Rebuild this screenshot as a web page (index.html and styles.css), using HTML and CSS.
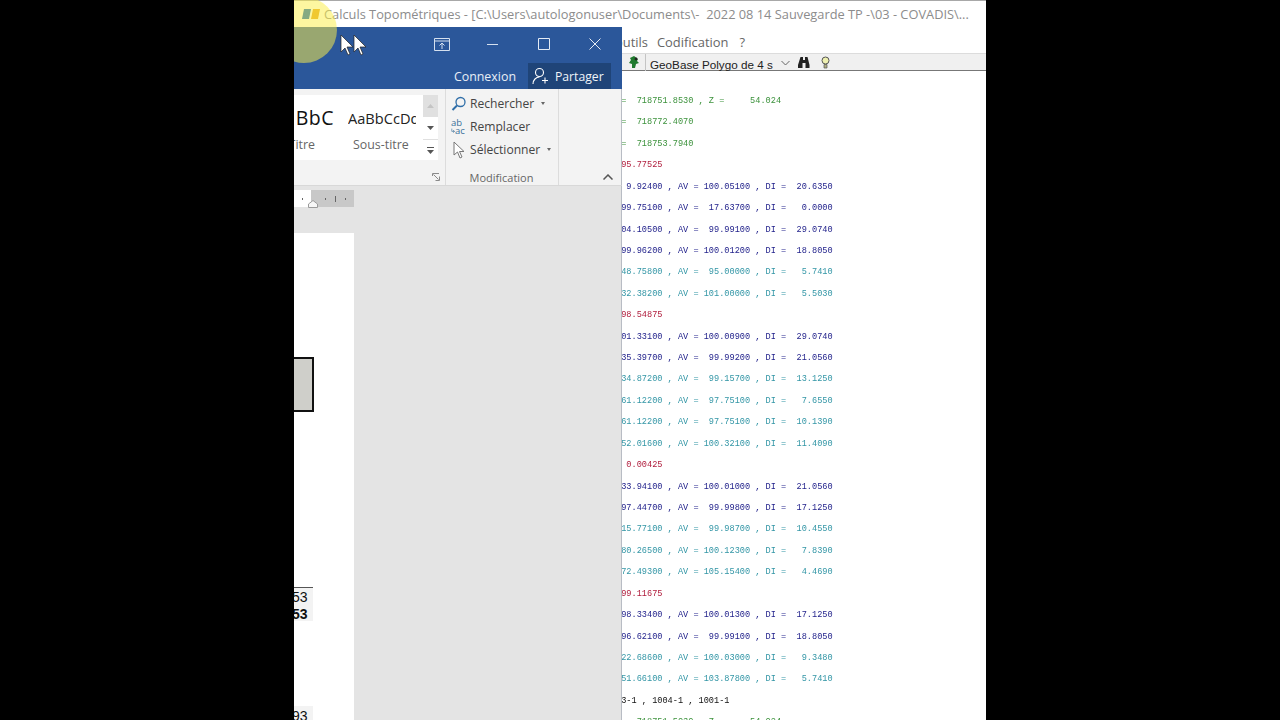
FILE: index.html
```html
<!DOCTYPE html>
<html lang="fr">
<head>
<meta charset="utf-8">
<title>Calculs Topométriques</title>
<link rel="stylesheet" href="styles.css">
</head>
<body>
<div class="screen">
  <div class="app">
    <div class="app-title">
      <svg class="app-logo" width="18" height="10" viewBox="0 0 18 10"><path d="M2 0h7L7 10H0z" fill="#005ebf"/><path d="M11 0h7l-2 10H9z" fill="#e49d15"/></svg>
      <span>Calculs Topométriques - [C:\Users\autologonuser\Documents\-  2022 08 14 Sauvegarde TP -\03 - COVADIS\...</span>
    </div>
    <div class="app-menu"><span>outils</span><span>Codification</span><span>?</span></div>
    <div class="app-tools">
      <svg class="tool-green" width="12" height="12" viewBox="0 0 12 12"><path d="M6 0l4 3-1 2 2 2-3 1-1 4H4V8L1 7l2-3-1-2z" fill="#1f7a2e"/><circle cx="8" cy="3" r="1.4" fill="#222"/></svg>
      <div class="combo"><span>GeoBase Polygo de 4 s</span><svg width="9" height="6" viewBox="0 0 9 6"><path d="M.5 1l4 4 4-4" fill="none" stroke="#666"/></svg></div>
      <svg class="tool-bino" width="12" height="11" viewBox="0 0 12 11"><path d="M2.5 0h2.5v3h2V0h2.500l2 8v3H7.500V6h-3v5H0V8z" fill="#222"/></svg>
      <svg class="tool-bulb" width="9" height="13" viewBox="0 0 9 13"><circle cx="4.500" cy="4.500" r="3.500" fill="#eef0b0" stroke="#555"/><path d="M3 8.500h3v3.500H3z" fill="#b0b080" stroke="#555" stroke-width=".7"/></svg>
    </div>
    <div class="listing">
      <div class="row green">=  718751.8530 , Z =     54.024</div>
      <div class="row green">=  718772.4070</div>
      <div class="row green">=  718753.7940</div>
      <div class="row red">95.77525</div>
      <div class="row navy"> 9.92400 , AV = 100.05100 , DI =  20.6350</div>
      <div class="row navy">99.75100 , AV =  17.63700 , DI =   0.0000</div>
      <div class="row navy">04.10500 , AV =  99.99100 , DI =  29.0740</div>
      <div class="row navy">99.96200 , AV = 100.01200 , DI =  18.8050</div>
      <div class="row teal">48.75800 , AV =  95.00000 , DI =   5.7410</div>
      <div class="row teal">32.38200 , AV = 101.00000 , DI =   5.5030</div>
      <div class="row red">98.54875</div>
      <div class="row navy">01.33100 , AV = 100.00900 , DI =  29.0740</div>
      <div class="row navy">35.39700 , AV =  99.99200 , DI =  21.0560</div>
      <div class="row teal">34.87200 , AV =  99.15700 , DI =  13.1250</div>
      <div class="row teal">61.12200 , AV =  97.75100 , DI =   7.6550</div>
      <div class="row teal">61.12200 , AV =  97.75100 , DI =  10.1390</div>
      <div class="row teal">52.01600 , AV = 100.32100 , DI =  11.4090</div>
      <div class="row red"> 0.00425</div>
      <div class="row navy">33.94100 , AV = 100.01000 , DI =  21.0560</div>
      <div class="row navy">97.44700 , AV =  99.99800 , DI =  17.1250</div>
      <div class="row teal">15.77100 , AV =  99.98700 , DI =  10.4550</div>
      <div class="row teal">80.26500 , AV = 100.12300 , DI =   7.8390</div>
      <div class="row teal">72.49300 , AV = 105.15400 , DI =   4.4690</div>
      <div class="row red">99.11675</div>
      <div class="row navy">98.33400 , AV = 100.01300 , DI =  17.1250</div>
      <div class="row navy">96.62100 , AV =  99.99100 , DI =  18.8050</div>
      <div class="row teal">22.68600 , AV = 100.03000 , DI =   9.3480</div>
      <div class="row teal">51.66100 , AV = 103.87800 , DI =   5.7410</div>
      <div class="row black">3-1 , 1004-1 , 1001-1</div>
      <div class="row green">=  718751.5030 , Z =     54.024</div>
    </div>
  </div>

  <div class="word">
    <div class="word-controls">
      <div class="ctl"><svg width="16" height="13" viewBox="0 0 16 13"><path d="M.5.500h15v12H.5zM.5 3h15M8 11V5M5.500 7.500L8 5l2.500 2.500" fill="none" stroke="#d5e0ef"/></svg></div>
      <div class="ctl"><svg width="11" height="1" viewBox="0 0 11 1"><path d="M0 .5h11" stroke="#d5e0ef"/></svg></div>
      <div class="ctl"><svg width="12" height="12" viewBox="0 0 12 12"><path d="M.5.500h11v11H.5z" fill="none" stroke="#e4ebf5"/></svg></div>
      <div class="ctl"><svg width="12" height="12" viewBox="0 0 12 12"><path d="M.5.500l11 11M11.500.500l-11 11" fill="none" stroke="#e4ebf5"/></svg></div>
    </div>
    <div class="word-account">
      <span class="connexion">Connexion</span>
      <div class="share">
        <svg width="18" height="18" viewBox="0 0 18 18"><circle cx="7.500" cy="5.500" r="4" fill="none" stroke="#fff" stroke-width="1.100"/><path d="M1 17c0-4 3-7 6.500-7M13 10.500v6M10 13.500h6" fill="none" stroke="#fff" stroke-width="1.100"/></svg>
        <span>Partager</span>
      </div>
    </div>
    <div class="ribbon">
      <div class="gallery">
        <div class="style-title"><span class="sample big">BbC</span><span class="style-name">Titre</span></div>
        <div class="style-sub"><span class="sample">AaBbCcDd</span><span class="style-name">Sous-titre</span></div>
      </div>
      <div class="gallery-scroll">
        <div class="gs gs-up"><svg width="7" height="4" viewBox="0 0 7 4"><path d="M0 4l3.500-4L7 4z" fill="#c4c4c4"/></svg></div>
        <div class="gs"><svg width="7" height="4" viewBox="0 0 7 4"><path d="M0 0l3.500 4L7 0z" fill="#555"/></svg></div>
        <div class="gs gs-more"><svg width="7" height="7" viewBox="0 0 7 7"><path d="M0 .5h7" stroke="#555"/><path d="M0 3l3.500 4L7 3z" fill="#555"/></svg></div>
      </div>
      <div class="launcher"><svg width="8" height="8" viewBox="0 0 8 8"><path d="M.5 3V.5H7M1.500 1.500l5 5M7.500 3.500v4h-4" fill="none" stroke="#8a8a8a"/></svg></div>
      <div class="edit-group">
        <div class="edit-items">
          <div class="edit-item"><svg width="16" height="16" viewBox="0 0 16 16"><circle cx="9.500" cy="6" r="4.500" fill="none" stroke="#2f6ea8" stroke-width="1.300"/><path d="M6 9.500L1.500 14" stroke="#2f6ea8" stroke-width="2"/></svg><span>Rechercher</span><i class="caret"></i></div>
          <div class="edit-item"><span class="abac"><b>ab</b><span class="abac-low"><svg width="4" height="6" viewBox="0 0 5 6"><path d="M1 0v3.500h3M2.500 2L4.500 3.500 2.500 5" fill="none" stroke="#3a6f9a" stroke-width=".8"/></svg><b>ac</b></span></span><span>Remplacer</span></div>
          <div class="edit-item"><svg width="16" height="18" viewBox="0 0 16 18"><path d="M3 1v13l3.500-3 2.500 6 2-1-2.500-5.500H13z" fill="#fff" stroke="#777"/></svg><span>Sélectionner</span><i class="caret"></i></div>
        </div>
        <div class="group-label">Modification</div>
      </div>
      <div class="ribbon-end"><svg width="10" height="6" viewBox="0 0 10 6"><path d="M.5 5.500L5 1l4.500 4.500" fill="none" stroke="#555" stroke-width="1.500"/></svg></div>
    </div>
    <div class="workspace">
      <div class="ruler">
        <div class="ruler-white"><i class="tick"></i></div>
        <svg class="indent" width="10" height="8" viewBox="0 0 10 8"><path d="M.5 7.500V4L5 .5 9.500 4v3.500z" fill="#f6f6f6" stroke="#9a9a9a"/></svg>
        <div class="ruler-grey"><i class="tick"></i><i class="tick tall"></i><i class="tick"></i></div>
      </div>
      <div class="page">
        <div class="shape"></div>
        <div class="cells">
          <div class="cell">53</div>
          <div class="cell bold">53</div>
        </div>
        <div class="cell last">93</div>
      </div>
    </div>
  </div>

  <div class="highlight"></div>
  <svg class="cursors" width="28" height="22" viewBox="0 0 28 22"><g fill="#fff" stroke="#222" stroke-width=".7"><path d="M1 1v17l4-4 3 7 2-1-3-7h6z"/><path d="M14 1v17l4-4 3 7 2-1-3-7h6z"/></g></svg>
</div>
</body>
</html>
```
FILE: styles.css
```css
* { box-sizing: border-box; }
html, body { margin: 0; height: 100%; background: #000; overflow: hidden; }
.screen { position: relative; width: 692px; height: 720px; margin-left: 294px; background: #fff; overflow: hidden; font-family: "Open Sans", "Noto Sans", sans-serif; }

.app { display: flex; flex-direction: column; height: 100%; }
.app-title { height: 27px; flex: none; display: flex; align-items: center; border-top: 1px solid #a8a8a8; padding-left: 8px; font-size: 12.82px; color: #8c8c8c; white-space: pre; }
.app-logo { margin-right: 4px; flex: none; }
.app-menu { height: 26px; flex: none; display: flex; gap: 11px; align-items: center; padding-left: 321px; padding-top: 4px; font-size: 12.9px; color: #666; }
.app-menu span:first-child { width: 31px; }
.app-tools { height: 18px; flex: none; display: flex; align-items: center; padding-left: 334px; background: #f0f0f0; border-top: 1px solid #dcdcdc; border-bottom: 1px solid #777; }
.tool-green { flex: none; }
.combo { width: 148px; height: 17px; margin-left: 5px; display: flex; align-items: center; justify-content: space-between; padding: 4px 3px 0 4px; overflow: hidden; font-family: "Liberation Sans", sans-serif; font-size: 11.7px; color: #222; border-left: 1px solid #c4c4c4; }
.combo svg { margin-top: -3px; }
.tool-bino { margin-left: 5px; flex: none; }
.tool-bulb { margin-left: 11px; flex: none; }

.listing { flex: 1; min-height: 0; padding: 20px 0 0 327.2px; font-family: "Liberation Mono", monospace; font-size: 8.6px; filter: blur(.25px); }
.row { height: 21.43px; line-height: 21.43px; white-space: pre; }
.green { color: #3c923c; }
.red { color: #b01c3c; }
.navy { color: #23238c; }
.teal { color: #3396a6; }
.black { color: #111; }

.word { position: absolute; left: 0; top: 27px; bottom: 0; width: 328px; display: flex; flex-direction: column; background: #e4e4e4; }
.word-controls { height: 36px; flex: none; display: flex; justify-content: flex-end; background: #2b579a; padding: 0 2px 2px 0; }
.ctl { width: 51px; display: flex; align-items: center; justify-content: center; }
.word-account { height: 26px; flex: none; display: flex; justify-content: flex-end; align-items: stretch; background: #2b579a; padding-right: 11px; }
.connexion { align-self: center; margin-right: 12px; font-size: 12.4px; color: #e8eef6; }
.share { width: 83px; display: flex; align-items: center; gap: 5px; padding-left: 4px; background: #1f4478; font-size: 12.2px; color: #f0f4f9; }

.ribbon { height: 97px; flex: none; display: flex; background: #f3f3f3; border-bottom: 1px solid #d8d8d8; border-right: 1px solid #b8bcc4; }
.gallery { width: 129px; height: 65px; margin-top: 6px; flex: none; display: flex; background: #fff; overflow: hidden; }
.style-title { width: 54px; flex: none; display: flex; flex-direction: column; align-items: flex-end; padding-right: 33px; }
.style-sub { flex: none; width: 68px; display: flex; flex-direction: column; overflow: hidden; white-space: nowrap; }
.sample { height: 38px; line-height: 46px; font-size: 14.6px; color: #222; }
.sample.big { font-size: 19.5px; color: #111; margin-right: -19px; letter-spacing: .5px; }
.style-name { margin-top: 3px; font-size: 12.4px; color: #666; }
.style-sub .style-name { margin-left: 5px; }
.gallery-scroll { width: 15px; height: 65px; margin-top: 6px; flex: none; display: flex; flex-direction: column; background: #fff; }
.gs { height: 22px; display: flex; align-items: center; justify-content: center; }
.gs-more { height: 21px; border-top: 1px solid #e0e0e0; }
.gs-up { background: #e0e0e0; }
.launcher { width: 8px; flex: none; margin: 0 5px 0 -6px; padding-bottom: 4px; display: flex; align-items: flex-end; }
.edit-group { width: 114px; flex: none; border-left: 1px solid #dcdcdc; border-right: 1px solid #dcdcdc; display: flex; flex-direction: column; justify-content: space-between; }
.edit-items { display: flex; flex-direction: column; padding: 3px 0 0 5px; }
.edit-item { height: 23px; display: flex; align-items: center; gap: 3px; font-size: 12.1px; color: #444; }
.edit-item svg { flex: none; }
.caret { width: 0; height: 0; margin-left: 4px; border: 2.5px solid transparent; border-top: 3px solid #666; border-bottom: 0; }
.abac { width: 16px; flex: none; display: flex; flex-direction: column; font-size: 9.5px; line-height: 8px; white-space: nowrap; }
.abac b { font-weight: 400; color: #3a6f9a; }
.abac-low { display: flex; align-items: center; }
.group-label { text-align: center; padding-right: 1px; font-size: 11px; color: #666; }
.ribbon-end { flex: 1; display: flex; align-items: flex-end; justify-content: flex-end; padding: 0 8px 5px 0; }

.workspace { flex: 1; min-height: 0; display: flex; flex-direction: column; padding-top: 4px; border-right: 1px solid #b8bcc4; }
.ruler { position: relative; width: 60px; height: 17px; flex: none; display: flex; background: #c8c8c8; }
.ruler-white { width: 17px; background: #fff; display: flex; align-items: center; justify-content: flex-end; padding-right: 8px; }
.ruler-grey { flex: 1; display: flex; align-items: center; justify-content: flex-end; gap: 9px; padding-right: 8px; }
.tick { width: 1px; height: 2px; background: #666; }
.tick.tall { height: 6px; }
.indent { position: absolute; left: 14px; bottom: -1px; }
.page { width: 60px; flex: 1; margin-top: 26px; background: #fff; min-height: 0; display: flex; flex-direction: column; }
.shape { width: 20px; height: 55px; margin-top: 124px; flex: none; background: #cfcfca; border: 2px solid #111; border-left: 0; }
.cells { width: 19px; margin-top: 175px; flex: none; border-top: 1px solid #555; }
.cell { height: 16px; line-height: 19px; background: #f3f3f3; font-family: "Liberation Sans", sans-serif; font-size: 14px; color: #111; overflow: hidden; text-indent: -2px; }
.cell.bold { height: 17px; line-height: 21px; font-weight: 700; }
.cell.last { width: 19px; margin-top: 85px; line-height: 21px; }

.highlight { position: absolute; left: -23px; top: -3px; width: 66px; height: 66px; border-radius: 50%; background: rgba(251, 238, 75, .53); }
.cursors { position: absolute; left: 46px; top: 34px; }
```
